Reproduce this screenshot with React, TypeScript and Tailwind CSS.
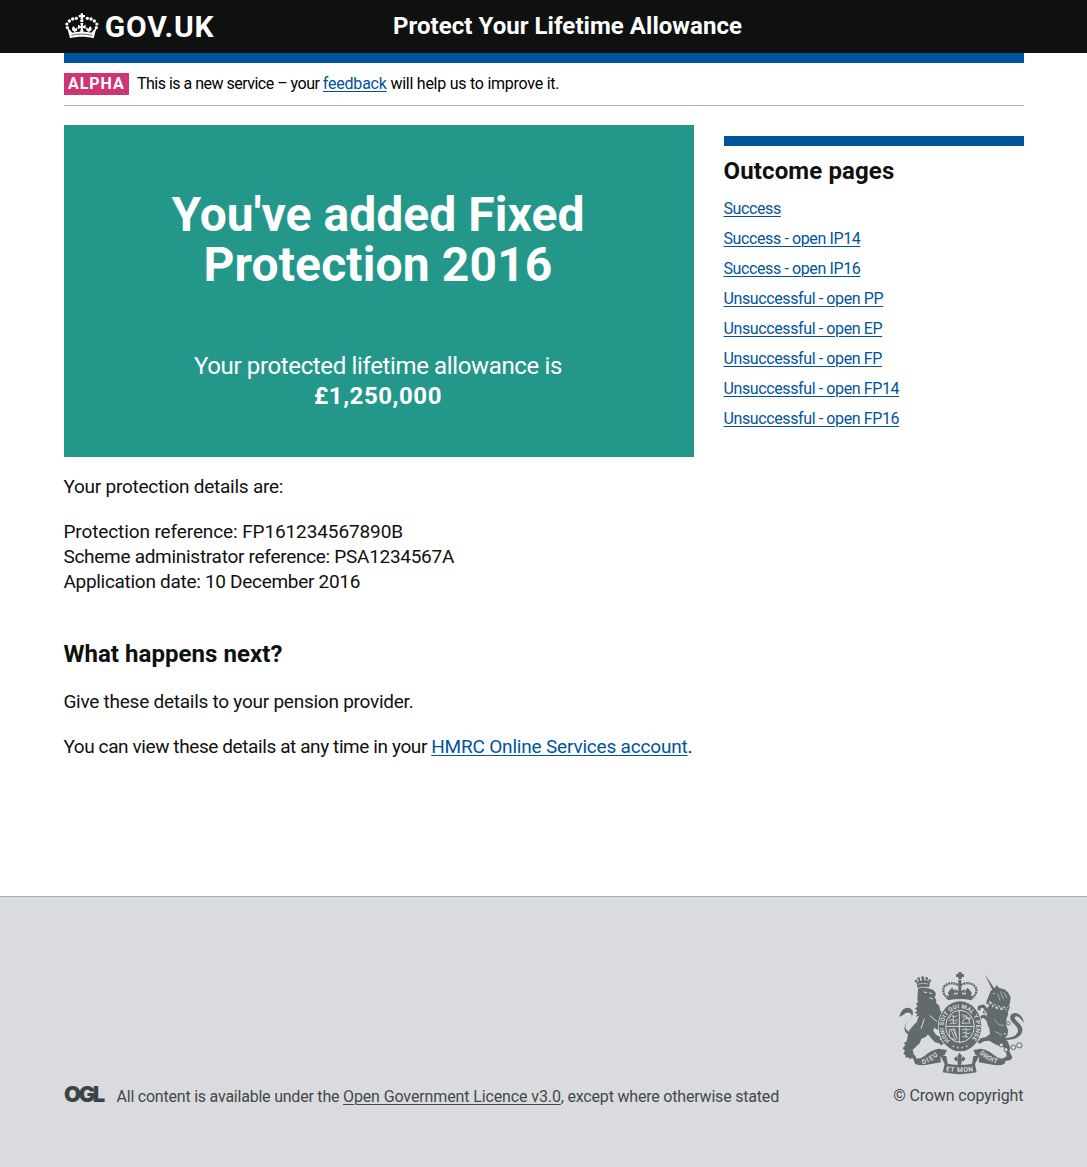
const link = "text-[#00549c] underline decoration-1 underline-offset-2";

const outcomes = [
  "Success",
  "Success - open IP14",
  "Success - open IP16",
  "Unsuccessful - open PP",
  "Unsuccessful - open EP",
  "Unsuccessful - open FP",
  "Unsuccessful - open FP14",
  "Unsuccessful - open FP16",
];

function Crown() {
  return (
    <svg viewBox="26 38 102 78" className="h-[26px] w-[34px]" fill="#fff">
      <path d="M73 39h7v5h6v7h-6v6h-7v-6h-6v-7h6z" />
      <circle cx="76.500" cy="61" r="5" />
      <circle cx="60" cy="54" r="5" />
      <circle cx="49" cy="56" r="5" />
      <circle cx="39" cy="62" r="5" />
      <circle cx="31.500" cy="71" r="4.800" />
      <circle cx="33" cy="82" r="4.800" />
      <circle cx="93" cy="54" r="5" />
      <circle cx="104" cy="56" r="5" />
      <circle cx="114" cy="62" r="5" />
      <circle cx="121.500" cy="71" r="4.800" />
      <circle cx="120" cy="82" r="4.800" />
      <path d="M72 68h9l-2 10 9-5v13l-9-4 3 14h-11l3-14-9 4V73l9 5z" />
      <path d="M52 78l5 7 7-4-2 10-7 4-8-6 1-8z" />
      <path d="M101 78l-5 7-7-4 2 10 7 4 8-6-1-8z" />
      <path d="M33 84l6 3 9 10c17-4 40-4 57 0l9-10 6-3-8 30c-20-6-51-6-71 0z" />
      <path d="M45 105c20-5 43-5 63 0" stroke="#0f1110" strokeWidth="2" fill="none" />
    </svg>
  );
}

function RoyalArms() {
  return (
    <svg viewBox="27 20 375 309" className="h-[103px] w-[125px] overflow-visible" fill="#626b6c">
      <defs>
        <path id="garter" d="M180 226A49 54 0 1 1 240 226" />
        <path id="dieu" d="M98 297Q128 288 149 266" />
        <path id="etmon" d="M168 317Q209 323 252 317" />
        <path id="droit" d="M268 264Q292 290 326 295" />
      </defs>
      <path d="M78 47l6 4 3-10 6 7 6-14 6 13 6-7 3 9 7-3-4 20q-18-5-34 2z" />
      <circle cx="78" cy="47" r="4" />
      <circle cx="86" cy="40" r="4" />
      <circle cx="98" cy="37" r="4.500" />
      <circle cx="110" cy="39" r="4" />
      <circle cx="119" cy="46" r="4" />
      <path d="M82 57q16-6 33-1" stroke="#dadbde" strokeWidth="2" fill="none" />
      <path d="M84 70q14-6 30-1l15 4 8 9v9l-4 3 6 10-1 8 10 9 2 12 6 10 1 13-3 15-2 11 6 11-3 7-12-7-11-6-2 9 8 12 13 7-2 8 10 1 9 5-3 9-8-3-2 6-8-7-12-3-14-15-7-9-7 8-13 6-5 13-12 11-9 8 3 14 7 7-1 7-12-3-5 4-5-6-8 1-1-8-6-4 5-9-7-7 8-9-4-7 8-5 3-16 5-17 11-14 12-12 2-9 4-8-10 2 6-9-9-1 8-9-8-5 9-7-5-8 6-5-2-8z" />
      <path d="M101 80l10 2M118 82l8 3M119 97l10 4M103 160l-10 30M119 150l22 19" stroke="#dadbde" strokeWidth="3" fill="none" />
      <path d="M67 213q-27-8-23-28 3-13 17-25 9-11-1-17-11-5-19 5l-14 7 3-7q5-15 17-20 14-4 20 7 6 13-7 26-13 13-14 23 0 13 22 19z" />

      <path d="M205 20h10v6h7v9h-7v7h-10v-7h-7v-9h7z" />
      <path d="M174 100Q153 82 163 63q16-16 42-4m7 0q27-13 44 5 10 19-12 36" fill="none" stroke="#626b6c" strokeWidth="7" strokeDasharray="6 2" />
      <path d="M205 44h9v33l10-6v14l-9-4 4 14h-19l4-14-10 4V71l11 6zM178 76l8-9 8 10-5 16h-9l-7-9zM241 76l-8-9-8 10 5 16h9l7-9z" />
      <path d="M171 91q38-8 77 0l-3 14q-35-8-71 0z" />

      <path d="M284 27l32 46-7 5z" />
      <path d="M302 77l14-11 4-7 6 8 17 5 11 9 8 15-2 17-5 12-4 12 4 9-5 13-2 20 6 14-1 15-8 10 9 12 7 18-3 10 9 18-5 8-15 3-7-8 10-6-3-19-9-11-19-4-21-13-16 2-12 7-9-4 11-12 16-4 12-9-2-16-6-14-4-18 4-18 1-12 5-9-9-3 1-9z" />
      <path d="M306 148l-16-14-10-12-12 3-1 10M308 172l-14-7-12-13-10 5" stroke="#626b6c" strokeWidth="9" strokeLinejoin="round" fill="none" />
      <path d="M296 111q25 20 62 19" stroke="#dadbde" strokeWidth="10" fill="none" />
      <path d="M295 110l8 13 5-12 6 17 7-14 6 19 8-15 6 18 8-13 4 14 5-15" stroke="#626b6c" strokeWidth="4" fill="none" />
      <path d="M308 86l8-3M323 85l7 20M331 78l10 24M342 81l9 18M312 162l15 16 14 2M316 199l20 10" stroke="#dadbde" strokeWidth="1.800" fill="none" />
      <path d="M345 218q31 0 38-17 4-12-10-24-17-14-11-27 9-13 25-3 13 9 15 26l-8-10q-10-14-18-9-6 4 7 16 20 16 12 34-9 19-49 20z" />
      <g fill="#dadbde" stroke="#626b6c" strokeWidth="3">
        <circle cx="284" cy="140" r="4" />
        <circle cx="355" cy="174" r="5" />
        <circle cx="345" cy="205" r="4" />
        <circle cx="334" cy="239" r="6" />
        <circle cx="348" cy="253" r="6" />
        <circle cx="370" cy="246" r="7" />
        <circle cx="388" cy="240" r="8" />
      </g>

      <ellipse cx="210" cy="183" rx="66" ry="77" fill="#dadbde" />
      <ellipse cx="210" cy="183" rx="64" ry="75" />
      <ellipse cx="210" cy="183" rx="43" ry="48" fill="none" stroke="#dadbde" strokeWidth="3" />
      <text fill="#dadbde" fontFamily="Roboto" fontWeight="700" fontSize="18">
        <textPath href="#garter" textLength="250">HONI SOIT QUI MAL Y PENSE</textPath>
      </text>
      <path d="M208 137v94M169 183h83" stroke="#dadbde" strokeWidth="3" />
      <path d="M177 158l8-7 9 4 8-5M176 166l10-3 8 4 9-4M179 176l8-4 7 3 8-4M190 150v26M216 147l24 17v-8M217 157l11-7 13 23-25 1 6-13 18-4M178 192v22l17 11 6-7-7-27zM183 193l12 28M189 191l9 22M216 194l10-4 9 4 7-4M216 204l9-3 9 4 8-3M217 215l8-3 10 3M228 189v30" stroke="#dadbde" strokeWidth="2.500" fill="none" />
      <circle cx="190" cy="243" r="2.500" fill="#dadbde" />
      <circle cx="203" cy="247" r="2.500" fill="#dadbde" />
      <circle cx="217" cy="247" r="2.500" fill="#dadbde" />
      <circle cx="230" cy="243" r="2.500" fill="#dadbde" />

      <path d="M67 274q18 12 36-2 19-18 43-22l25 4-7 15-13 5 2 17-34 6q-30 6-44-2z" />
      <path d="M351 274q-18 12-35-2-19-18-43-22l-23 4 7 15 11 5-2 17 34 6q30 6 44-2z" />
      <path d="M151 271l18 1 4 23q36 7 73 0l4-23 18-1-13 25 5 25q-50 11-102 0l6-25z" />
      <g fill="#dadbde" fontFamily="Roboto" fontWeight="700" fontSize="20">
        <text><textPath href="#dieu" textLength="54">DIEU</textPath></text>
        <text><textPath href="#etmon" textLength="82">ET MON</textPath></text>
        <text><textPath href="#droit" textLength="62">DROIT</textPath></text>
      </g>
      <path d="M209 262l7 10-3 9 7-8 6 7-5 8-8-2 3 5-4 8h-7l-3-8 3-5-8 2-5-8 6-7 7 8-3-9z" />
    </svg>
  );
}

export default function App() {
  return (
    <div className="flex h-[1167px] flex-col bg-white font-['Roboto',sans-serif] text-[19px] leading-[25px] text-[#0f1110]">
      <header className="h-[53px] bg-[#0f1110] text-white">
        <div className="ml-16 flex w-[960px] items-start">
          <div className="flex w-[329px] items-start pl-[0.6px]">
            <div className="pt-[12.600px]"><Crown /></div>
            <div className="ml-[6.200px] pt-[9px] text-[30px] leading-9 font-bold tracking-[0.8px]">GOV.UK</div>
          </div>
          <div className="pt-[11px] text-2xl leading-[30px] font-bold tracking-[0.048px]">Protect Your Lifetime Allowance</div>
        </div>
      </header>

      <div className="ml-16 w-[960px]">
        <div className="h-2.5 bg-[#00549c]" />
        <div className="flex h-[43px] items-start border-b border-[#b4b7b9] pt-2.5 text-base">
          <strong className="h-[22px] w-[65px] bg-[#cf3474] pl-1 leading-[21px] font-bold tracking-[0.95px] text-white">ALPHA</strong>
          <p className="ml-2 leading-[21px] whitespace-nowrap text-black">
            <span className="tracking-[-0.51px]">This is a new service – your </span>
            <a className={`${link} tracking-[-0.21px]`}>feedback</a>
            <span className="tracking-[-0.25px]"> will help us to improve it.</span>
          </p>
        </div>

        <div className="flex pt-[19px]">
          <main className="w-[630px] whitespace-nowrap">
            <section className="h-[332px] bg-[#24978b] pt-[65px] pr-0.5 text-center text-white">
              <h1 className="text-5xl leading-[50px] font-bold">
                <span className="block tracking-[0.04px]">You've added Fixed</span>
                <span className="block tracking-[0.13px]">Protection 2016</span>
              </h1>
              <p className="mt-[61px] text-2xl leading-[30px]">
                <span className="block tracking-[-0.36px]">Your protected lifetime allowance is</span>
                <strong className="block font-bold tracking-[0.55px]">£1,250,000</strong>
              </p>
            </section>
            <div className="-ml-[0.6px]">
              <p className="mt-[17px] tracking-[-0.24px]">Your protection details are:</p>
              <p className="mt-5">
                <span className="block tracking-[-0.11px]">Protection reference: FP161234567890B</span>
                <span className="block tracking-[-0.285px]">Scheme administrator reference: PSA1234567A</span>
                <span className="block tracking-[-0.295px]">Application date: 10 December 2016</span>
              </p>
              <h2 className="mt-[45px] text-2xl leading-[30px] font-bold tracking-[0.053px]">What happens next?</h2>
              <p className="mt-5 tracking-[-0.25px]">Give these details to your pension provider.</p>
              <p className="mt-5">
                <span className="tracking-[-0.405px]">You can view these details at any time in your </span>
                <a className={`${link} tracking-[-0.19px]`}>HMRC Online Services account</a>.
              </p>
            </div>
          </main>

          <aside className="mt-[11px] ml-[30px] w-[300px] border-t-10 border-[#00549c] pt-2.5">
            <h2 className="-ml-[0.5px] text-2xl leading-[30px] font-bold tracking-[0.13px]">Outcome pages</h2>
            <ul className="mt-2 -ml-[0.5px] text-base leading-[30px] tracking-[-0.39px]">
              {outcomes.map((o) => (
                <li key={o}><a className={link}>{o}</a></li>
              ))}
            </ul>
          </aside>
        </div>
      </div>

      <footer className="mt-auto h-[271px] border-t border-[#a1acb2] bg-[#dadbde] text-base leading-5 text-[#42484a]">
        <div className="ml-16 flex w-[960px] items-start justify-between whitespace-nowrap">
          <div className="flex items-start pt-[189px]">
            <div className="h-[18px] w-[41px] font-['Inter'] text-[22px] leading-[17px] font-black tracking-[-2.400px] text-[#3d4446]">OGL</div>
            <p className="ml-[11.500px] pt-px">
              <span className="tracking-[-0.22px]">All content is available under the </span>
              <a className="tracking-[-0.12px] underline decoration-1 underline-offset-2">Open Government Licence v3.0</a>
              <span className="tracking-[-0.195px]">, except where otherwise stated</span>
            </p>
          </div>
          <div className="flex flex-col items-end pt-[75px]">
            <RoyalArms />
            <p className="mt-[11px] mr-[0.6px] tracking-[-0.13px]">© Crown copyright</p>
          </div>
        </div>
      </footer>
    </div>
  );
}
